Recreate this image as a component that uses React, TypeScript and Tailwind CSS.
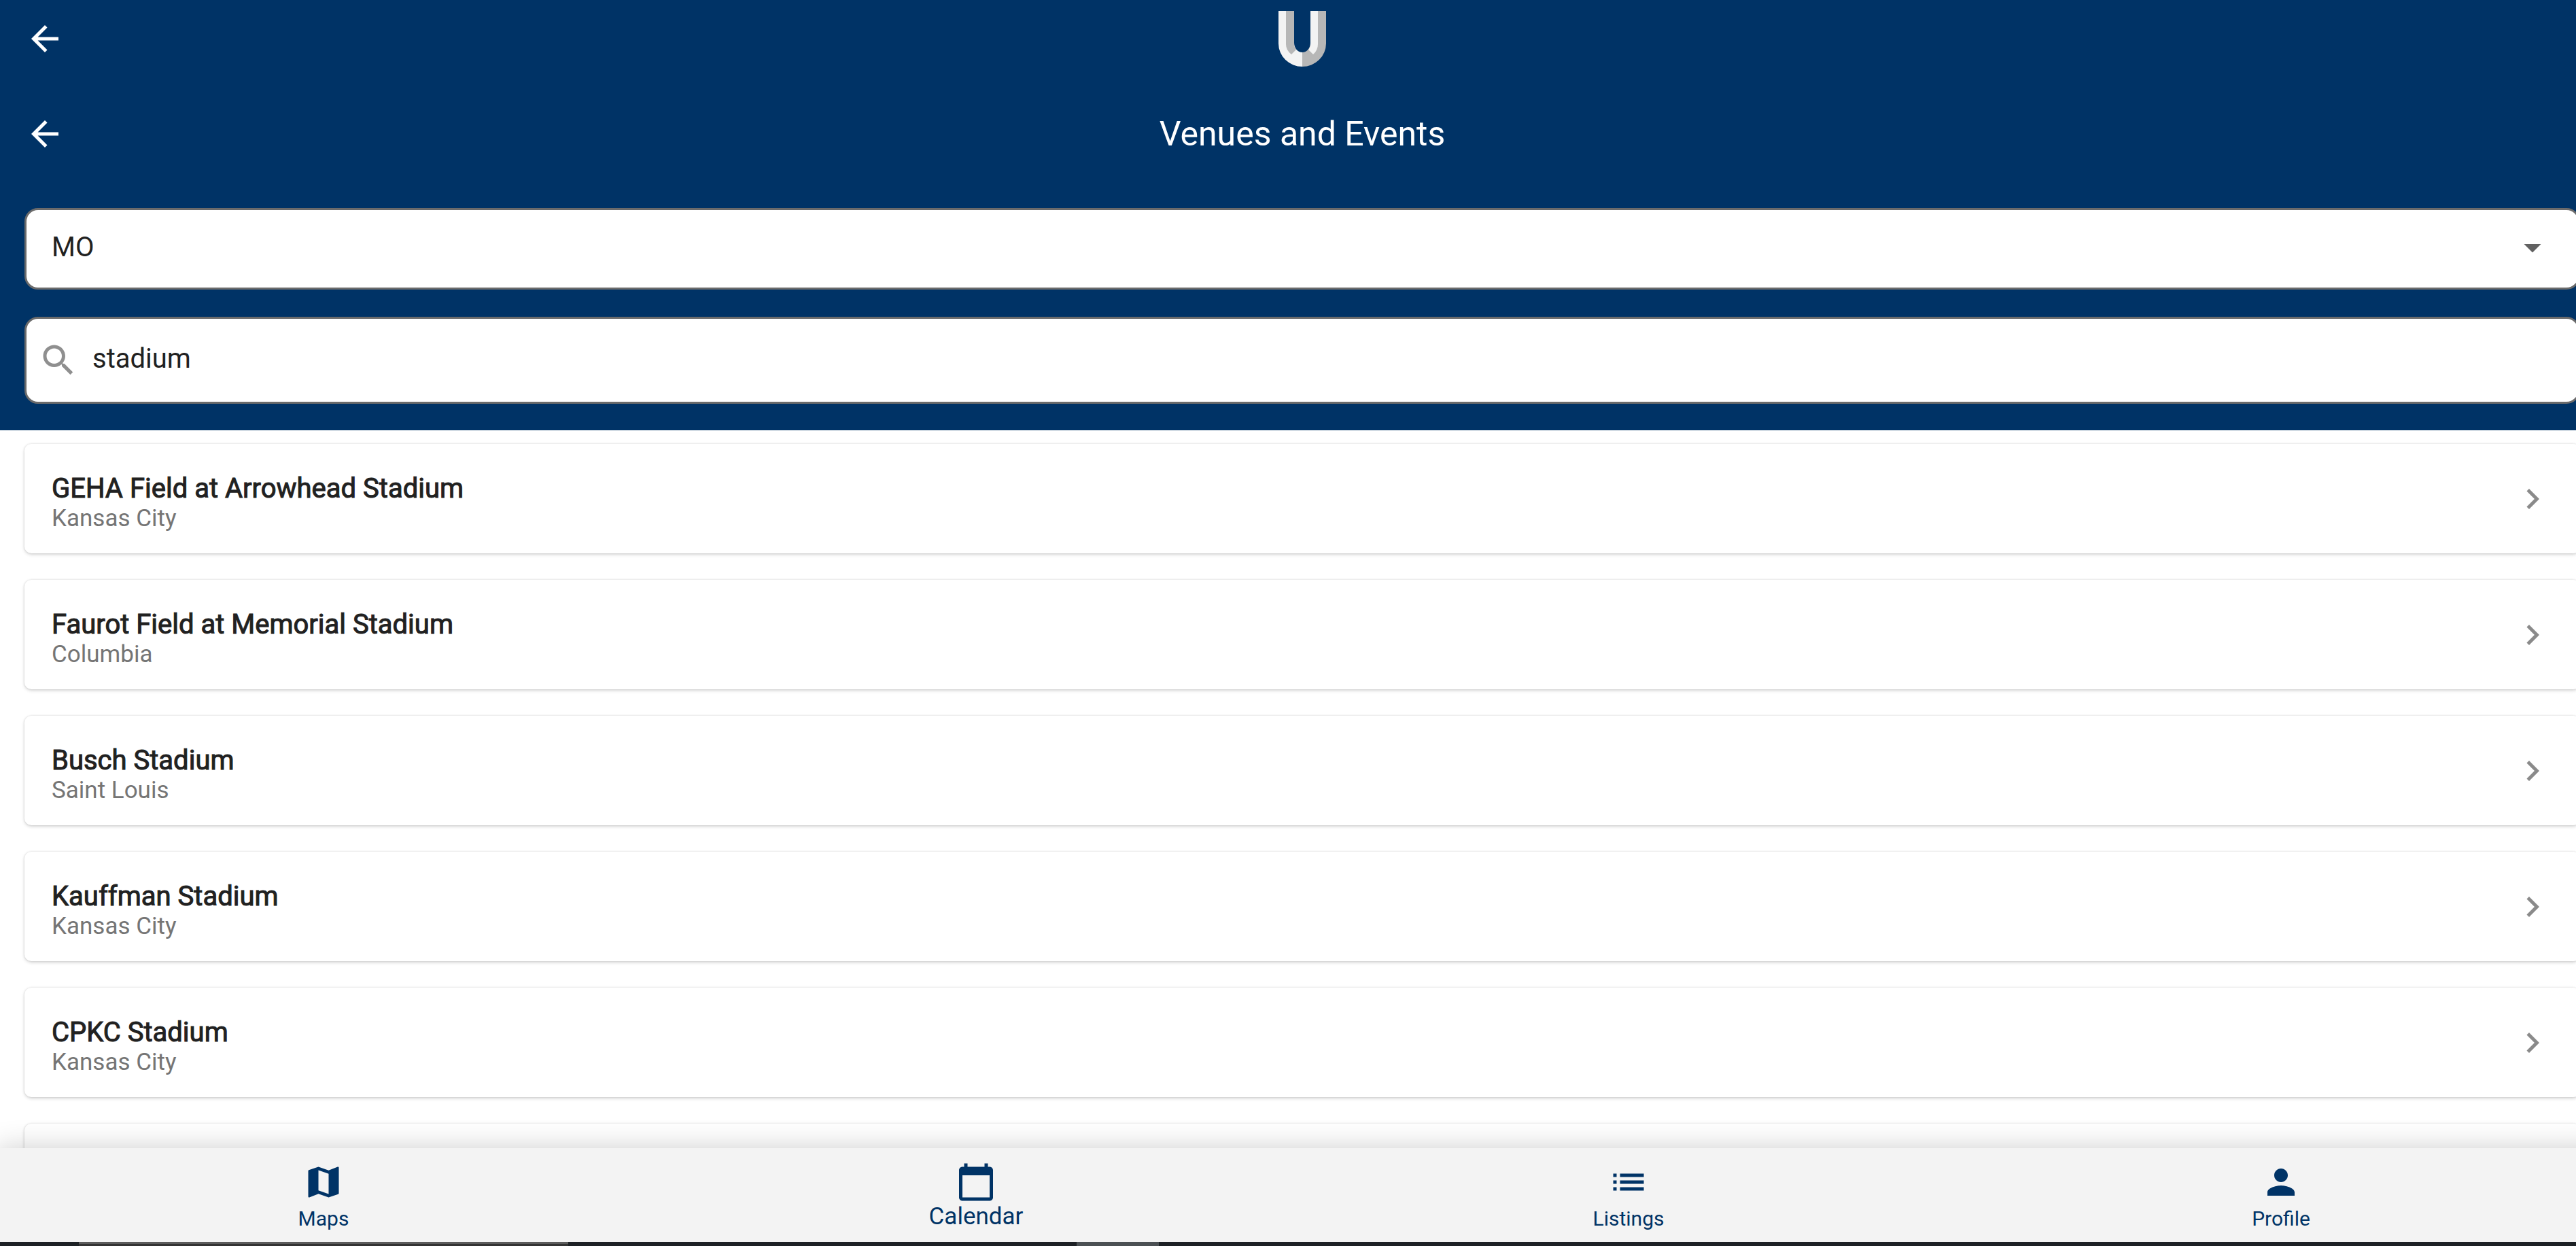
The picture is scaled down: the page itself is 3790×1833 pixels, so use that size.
import React from "react";

const venues = [
  { name: "GEHA Field at Arrowhead Stadium", city: "Kansas City" },
  { name: "Faurot Field at Memorial Stadium", city: "Columbia" },
  { name: "Busch Stadium", city: "Saint Louis" },
  { name: "Kauffman Stadium", city: "Kansas City" },
  { name: "CPKC Stadium", city: "Kansas City" },
];

const icons = {
  back: "M20 11H7.83l5.59-5.59L12 4l-8 8 8 8 1.41-1.41L7.83 13H20v-2z",
  dropDown: "M7 10l5 5 5-5z",
  search:
    "M15.5 14h-.79l-.28-.27C15.41 12.59 16 11.11 16 9.5 16 5.91 13.09 3 9.5 3S3 5.91 3 9.5 5.91 16 9.5 16c1.61 0 3.09-.59 4.23-1.57l.27.28v.79l5 4.99L20.49 19l-4.99-5zm-6 0C7.01 14 5 11.99 5 9.5S7.01 5 9.5 5 14 7.01 14 9.5 11.99 14 9.5 14z",
  chevron: "M10 6L8.59 7.41 13.17 12l-4.58 4.59L10 18l6-6z",
  map: "M20.5 3l-.16.03L15 5.1 9 3 3.36 4.9c-.21.07-.36.25-.36.48V20.5c0 .28.22.5.5.5l.16-.03L9 18.9l6 2.1 5.64-1.9c.21-.07.36-.25.36-.48V3.5c0-.28-.22-.5-.5-.5zM15 19l-6-2.11V5l6 2.11V19z",
  calendar:
    "M20 3h-1V1h-2v2H7V1H5v2H4c-1.1 0-2 .9-2 2v16c0 1.1.9 2 2 2h16c1.1 0 2-.9 2-2V5c0-1.1-.9-2-2-2zm0 18H4V8h16v13z",
  list: "M3 13h2v-2H3v2zm0 4h2v-2H3v2zm0-8h2V7H3v2zm4 4h14v-2H7v2zm0 4h14v-2H7v2zM7 7v2h14V7H7z",
  person:
    "M12 12c2.21 0 4-1.79 4-4s-1.79-4-4-4-4 1.79-4 4 1.79 4 4 4zm0 2c-2.67 0-8 1.34-8 4v2h16v-2c0-2.66-5.33-4-8-4z",
};

function Icon({ d, className = "" }: { d: string; className?: string }) {
  return (
    <svg viewBox="0 0 24 24" aria-hidden="true" className={`size-[60px] shrink-0 fill-current ${className}`}>
      <path d={d} />
    </svg>
  );
}

function Logo() {
  return (
    <svg viewBox="0 0 70 82" role="img" aria-label="U logo" className="h-[82px] w-[70px]">
      <path d="M0 0H23V47A12 14 0 0 0 35 61V82A35 34 0 0 1 0 48Z" fill="#f3f3f3" />
      <path d="M70 0H47V47A12 14 0 0 1 35 61V82A35 34 0 0 0 70 48Z" fill="#b7b7b7" />
      <path d="M11 0H23V48Q23 54 26 57L19 64Q11 58 11 49Z" fill="#b7b7b7" />
      <path d="M47 0H58V49Q58 58 51 64L44 57Q47 54 47 48Z" fill="#f3f3f3" />
    </svg>
  );
}

function VenueCard({ name, city }: { name: string; city: string }) {
  return (
    <li>
      <button
        type="button"
        className="flex h-[161px] w-full items-center justify-between rounded-[10px] bg-white px-10 text-left shadow-[0_2px_5px_rgba(0,0,0,0.16),0_0_3px_rgba(0,0,0,0.12)]"
      >
        <span className="flex flex-col pt-3">
          <span className="text-[40px] leading-[46px] text-[#212121] [-webkit-text-stroke:1px_#212121]">{name}</span>
          <span className="text-[35px] leading-[42px] text-[#757575]">{city}</span>
        </span>
        <Icon d={icons.chevron} className="text-[#8a8a8a]" />
      </button>
    </li>
  );
}

function NavItem({ d, label, active = false }: { d: string; label: string; active?: boolean }) {
  return (
    <button type="button" className="flex h-[138px] flex-1 flex-col items-center justify-between pt-5 pb-[17px]">
      <Icon d={d} />
      <span className={active ? "text-[35px] leading-[41px]" : "text-[30px] leading-[35px]"}>{label}</span>
    </button>
  );
}

export default function App() {
  return (
    <div className="h-screen overflow-hidden bg-white font-[Roboto,sans-serif]">
      <div className="-mr-[46px] -ml-1 flex h-full flex-col">
        <header className="shrink-0 bg-[#003366] px-10 pb-[39px] text-white">
          <div className="grid h-[113px] grid-cols-[60px_1fr_60px] items-center justify-items-center">
            <button type="button" aria-label="Back">
              <Icon d={icons.back} />
            </button>
            <Logo />
          </div>
          <div className="mb-[26px] grid h-[167px] grid-cols-[60px_1fr_60px] items-center justify-items-center">
            <button type="button" aria-label="Back to venues">
              <Icon d={icons.back} />
            </button>
            <h1 className="text-[50px] leading-[60px]">Venues and Events</h1>
          </div>
          <div className="relative text-[#212121]">
            <select
              aria-label="State"
              defaultValue="MO"
              className="block h-[120px] w-full appearance-none rounded-[20px] border-3 border-[#6b6b6b] bg-white px-[37px] pb-1 text-[40px]"
            >
              <option>MO</option>
            </select>
            <Icon d={icons.dropDown} className="pointer-events-none absolute top-7 right-10 text-[#616161]" />
          </div>
          <label className="mt-10 flex h-32 items-center gap-5 rounded-[20px] border-3 border-[#6b6b6b] bg-white px-[17px] text-[#212121]">
            <Icon d={icons.search} className="text-[#8f8f8f]" />
            <input
              type="text"
              aria-label="Search venues"
              defaultValue="stadium"
              className="h-full min-w-0 flex-1 bg-transparent pb-1.5 text-[40px] outline-none"
            />
          </label>
        </header>

        <main className="min-h-0 flex-1 overflow-hidden px-10 pt-5">
          <ul className="flex flex-col gap-[39px]">
            {venues.map((v) => (
              <VenueCard key={v.name} name={v.name} city={v.city} />
            ))}
            <li aria-hidden="true" className="h-[161px] rounded-[10px] bg-white shadow-[0_2px_5px_rgba(0,0,0,0.16),0_0_3px_rgba(0,0,0,0.12)]" />
          </ul>
        </main>

        <nav className="relative flex shrink-0 bg-[#f3f3f3] text-[#003366] shadow-[0_0_40px_rgba(0,0,0,0.2)]">
          <NavItem d={icons.map} label="Maps" />
          <NavItem d={icons.calendar} label="Calendar" active />
          <NavItem d={icons.list} label="Listings" />
          <NavItem d={icons.person} label="Profile" />
        </nav>
        <div className="relative flex h-[6px] shrink-0 bg-[#1d2125]">
          <div className="ml-[120px] w-[720px] border-t-[3px] border-[#5c5c5c] bg-[#333333]" />
          <div className="ml-[748px] w-[121px] bg-[#4b5053]" />
        </div>
      </div>
    </div>
  );
}
